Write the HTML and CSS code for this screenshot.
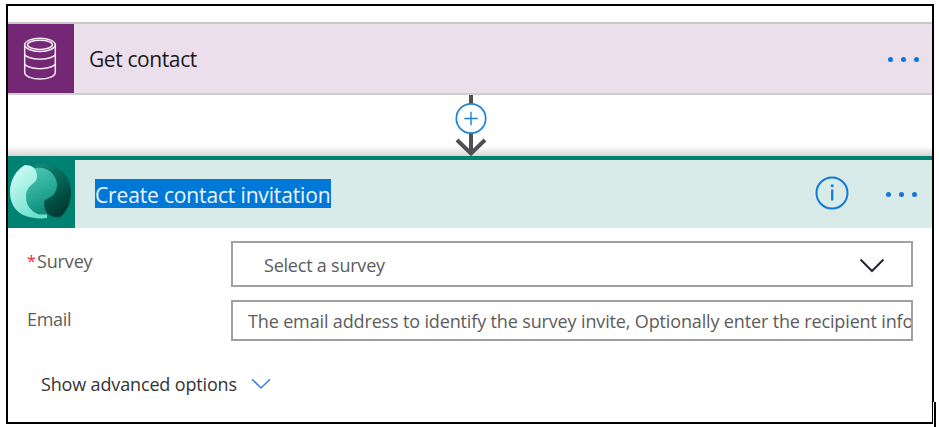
FILE: index.html
```html
<!DOCTYPE html>
<html lang="en">
<head>
<meta charset="utf-8">
<title>Flow designer</title>
<link rel="stylesheet" href="styles.css">
</head>
<body>
<main class="frame">
  <section class="step">
    <div class="step-icon dataverse">
      <svg width="34" height="44" viewBox="0 0 34 44" fill="none" stroke="#f3e9f3" stroke-width="1.500">
        <ellipse cx="17" cy="7.800" rx="15.300" ry="6.600"/>
        <ellipse cx="17" cy="7.800" rx="12.500" ry="4.600"/>
        <path d="M1.700 8v27.500c0 3.600 6.800 6.600 15.300 6.600s15.300-3 15.300-6.600V8M1.700 16.500c0 3.200 6.800 5.700 15.300 5.700s15.300-2.500 15.300-5.700M1.700 26c0 3.200 6.800 5.700 15.300 5.700S32.300 29.200 32.300 26"/>
      </svg>
    </div>
    <h2 class="title get"><span>Get contact</span></h2>
    <div class="dots"><i></i><i></i><i></i></div>
  </section>

  <div class="connector">
    <svg width="34" height="62" viewBox="0 0 34 62" fill="none">
      <path d="M17 0v58" stroke="#505050" stroke-width="4"/>
      <path d="M3 45l14 13.500L31 45" stroke="#505050" stroke-width="4"/>
      <circle cx="17" cy="23.500" r="14.700" fill="#fff" stroke="#1783da" stroke-width="1.700"/>
      <path d="M10.300 23.500h13.400M17 16.800v13.400" stroke="#1783da" stroke-width="1.400"/>
    </svg>
  </div>

  <section class="card">
    <header class="card-head">
      <div class="step-icon voice">
        <svg width="63" height="56" viewBox="0 0 63 56">
          <defs>
            <linearGradient id="pale" x1="0" y1="0" x2="0.600" y2="1"><stop offset="0" stop-color="#d9fffa"/><stop offset="1" stop-color="#6fe0cc"/></linearGradient>
            <linearGradient id="mid" x1="0" y1="0" x2="0.300" y2="1"><stop offset="0" stop-color="#4cc8b4"/><stop offset="0.500" stop-color="#2fb09d"/><stop offset="1" stop-color="#0f8f7d"/></linearGradient>
            <linearGradient id="deep" x1="0" y1="0" x2="0.500" y2="1"><stop offset="0" stop-color="#168b7c"/><stop offset="0.500" stop-color="#056657"/><stop offset="1" stop-color="#003c34"/></linearGradient>
          </defs>
          <path fill="url(#deep)" d="M24 1C29-0.500 36 0 42 1.500 54 5 61 16 61 28c0 11-4 20-11 25-6 1-12-2-15-6-1-3-1-6-1-9L27 16z"/>
          <path fill="url(#pale)" d="M15 1c6 0 12 3 12 9v6L17 40l20 10v4c-7 1-17 0-24-3C4 46 0 38 0 28 0 16 6 6 15 1z"/>
          <path fill="url(#mid)" d="M24 4.500c7-2 15 0 19 6 5 6 5 13 2 18-3 6-11 6-11 10 0 5 1 9 4 12h-9c-8-3-13-9-13-18 0-6 3-10 7-13 3-2 4-4 4-8 0-3-1-6-3-7z"/>
        </svg>
      </div>
      <h2 class="title create"><mark>Create contact invitation</mark></h2>
      <svg class="info" width="34" height="34" viewBox="0 0 34 34">
        <circle cx="17" cy="17" r="15.500" fill="none" stroke="#0f7ad8" stroke-width="2"/>
        <path d="M17.200 13.500v11" stroke="#0f7ad8" stroke-width="2.200"/>
        <circle cx="17.200" cy="9.700" r="1.500" fill="#0f7ad8"/>
      </svg>
      <div class="dots"><i></i><i></i><i></i></div>
    </header>
    <div class="form">
      <div class="row survey">
        <label><b>*</b><span>Survey</span></label>
        <div class="field select">
          <span>Select a survey</span>
          <svg width="26" height="16" viewBox="0 0 26 16" fill="none" stroke="#252530" stroke-width="2"><path d="M1.500 2.500L13 14 24.500 2.500"/></svg>
        </div>
      </div>
      <div class="row email">
        <label><span>Email</span></label>
        <div class="field"><span>The email address to identify the survey invite, Optionally enter the recipient info</span></div>
      </div>
      <div class="advanced">
        <span>Show advanced options</span>
        <svg width="20" height="12" viewBox="0 0 20 12" fill="none" stroke="#3c7be8" stroke-width="1.500"><path d="M1 1.200l9 8.800 9-8.800"/></svg>
      </div>
    </div>
  </section>
  <div class="caret"></div>
</main>
</body>
</html>
```
FILE: styles.css
```css
* { box-sizing: border-box; }
body {
  display: flow-root;
  height: 427px;
  margin: 0;
  background: #fff;
  font-family: "Open Sans", "Noto Sans", sans-serif;
  color: #5c5c5c;
}
.frame {
  position: relative;
  width: 928px;
  height: 420px;
  margin: 4px 0 0 6px;
  border: 2px solid #000;
  padding-top: 16px;
}
.step {
  display: flex;
  align-items: center;
  height: 73px;
  border-top: 2px solid #c9c7c9;
  border-bottom: 2px solid #cfcdcf;
  background: #ebdfeb;
}
.step-icon {
  display: flex;
  align-items: center;
  justify-content: center;
  flex: none;
}
.dataverse {
  width: 66px;
  height: 69px;
  padding-right: 3px;
  background: #742774;
}
.title {
  margin: 0;
  font-weight: 400;
  font-size: 21px;
  line-height: 28px;
  white-space: nowrap;
}
.get {
  margin-left: 15px;
  padding-top: 1px;
  color: #1b1720;
  letter-spacing: -0.400px;
}
.dots {
  display: flex;
  gap: 8px;
  margin-left: auto;
  margin-right: 13px;
}
.dots i {
  width: 5px;
  height: 5px;
  border-radius: 50%;
  background: #0f78d7;
}
.step .dots { padding-top: 2px; }
.connector {
  display: flex;
  justify-content: center;
  height: 61px;
  padding-left: 2px;
  background: linear-gradient(#fff 84%, #d4d4d4);
}
.card-head {
  display: flex;
  height: 72px;
  align-items: center;
  border-top: 4px solid #008272;
  background: #d9ebe8;
}
.voice {
  width: 67px;
  height: 72px;
  margin-top: -4px;
  padding-right: 1px;
  background: #008272;
}
.create { margin-left: 20px; }
.create mark {
  display: block;
  height: 29px;
  width: 236px;
  margin-top: -1px;
  line-height: 32px;
  background: #0078d7;
  color: #eef7ff;
  letter-spacing: -0.150px;
}
.info {
  margin-left: auto;
  margin-top: -2px;
}
.card-head .dots {
  margin-left: 37px;
  margin-right: 15px;
}
.form { padding: 13px 19px 0; }
.row {
  display: flex;
  align-items: flex-start;
  font-size: 18px;
}
.row label {
  display: flex;
  width: 204px;
  flex: none;
  line-height: 24px;
  letter-spacing: -0.300px;
}
.survey label { padding-top: 8px; }
.survey label span { letter-spacing: -0.150px; }
.email label { padding-top: 7px; }
label b {
  width: 10px;
  color: #f0283c;
  font-size: 16px;
  font-weight: 400;
}
.field {
  display: flex;
  align-items: center;
  width: 682px;
  height: 41px;
  padding-left: 15px;
  border: 2px solid #a0a0a0;
  overflow: hidden;
  white-space: nowrap;
  letter-spacing: -0.145px;
}
.field span { padding-top: 1px; }
.select {
  height: 46px;
  justify-content: space-between;
  padding: 0 26px 0 31px;
  letter-spacing: -0.220px;
}
.select svg { margin-top: 2px; }
.email { margin-top: 13px; }
.advanced {
  display: flex;
  align-items: center;
  gap: 14px;
  margin: 31px 0 0 14px;
  font-size: 18px;
  line-height: 24px;
  color: #333;
  letter-spacing: -0.150px;
}
.caret {
  position: absolute;
  left: 925px;
  top: 396px;
  width: 3px;
  height: 25px;
  border-left: 1px solid #fff;
  background: #000;
}
```
